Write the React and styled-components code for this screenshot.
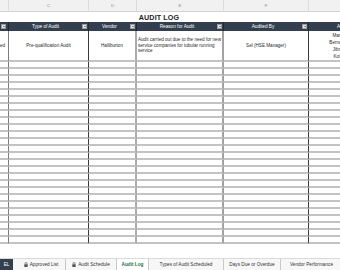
import styled, { createGlobalStyle } from 'styled-components';

const Global = createGlobalStyle`
  html, body {
    margin: 0;
    padding: 0;
    background: #fff;
    width: 340px;
    height: 270px;
    overflow: hidden;
    font-family: "Liberation Sans", Arial, sans-serif;
  }
`;

const Page = styled.div`
  width: 340px;
  height: 270px;
  display: flex;
  flex-direction: column;
  overflow: hidden;
`;

const Sheet = styled.div`
  display: grid;
  grid-template-columns: 9px 80px 48px 87px 85px 60px;
  grid-template-rows: 12px 10px 9px 31px repeat(26, 7px);
  width: 369px;
`;

const borders = {
  b: '1px solid #7d7d7d',
  c: '1px solid #3a3a3a',
  d: '2px solid #ababab',
  e: '2px solid #a2a2a2',
  f: '1px solid #3a3a3a',
  g: 'none',
};

const Letter = styled.div`
  background: #f1f1f1;
  border-bottom: 1px solid #d2d2d2;
  border-right: 1px solid #dcdcdc;
  color: #8a8a8a;
  font-size: 4.4px;
  display: flex;
  align-items: center;
  justify-content: center;
`;

const TitleCell = styled.div`
  grid-column: ${({ $span }) => $span || 'auto'};
  display: flex;
  align-items: center;
  justify-content: center;
  font-weight: bold;
  font-size: 7.2px;
  color: #1e1e1e;
  letter-spacing: 0.1px;
`;

const Head = styled.div`
  background: #333f4f;
  border-right: ${({ $col }) => ($col === 'g' ? 'none' : '1px solid #1f2833')};
  color: #fff;
  font-size: 4.7px;
  display: flex;
  align-items: center;
  padding-right: 1px;
  overflow: hidden;
  white-space: nowrap;
`;

const HeadLabel = styled.span`
  flex: 1;
  text-align: center;
`;

const Drop = styled.span`
  width: 5px;
  height: 5px;
  flex: none;
  background: #e4e4e4;
  border: 0.5px solid #9a9a9a;
  box-sizing: border-box;
  display: flex;
  align-items: center;
  justify-content: center;
  margin-left: ${({ $only }) => ($only ? '1px' : '0')};
  &::after {
    content: '';
    border-left: 1.3px solid transparent;
    border-right: 1.3px solid transparent;
    border-top: 1.5px solid #333;
  }
`;

const Cell = styled.div`
  border-right: ${({ $col }) => borders[$col]};
  border-bottom: 2px solid #c3c3c3;
  font-size: 4.6px;
  line-height: 5.6px;
  color: #2a2a2a;
  display: flex;
  align-items: center;
  justify-content: ${({ $align }) => $align || 'center'};
  text-align: ${({ $text }) => $text || 'center'};
  padding: 0 ${({ $padR }) => $padR || 0}px 0 ${({ $padL }) => $padL || 0}px;
  overflow: hidden;
  white-space: ${({ $wrap }) => ($wrap ? 'normal' : 'nowrap')};
`;

const Names = styled.div`
  display: flex;
  flex-direction: column;
  align-items: center;
  line-height: 7px;
`;

const Spacer = styled.div`
  flex: 1;
`;

const TabBar = styled.div`
  height: 12px;
  flex: none;
  display: flex;
  align-items: stretch;
  background: #f7f7f7;
  border-top: 1px solid #dadada;
  box-sizing: border-box;
  white-space: nowrap;
`;

const Tab = styled.div`
  width: ${({ $w }) => $w}px;
  flex: none;
  box-sizing: border-box;
  display: flex;
  align-items: center;
  justify-content: center;
  gap: 2px;
  font-size: 4.7px;
  font-weight: ${({ $active }) => ($active ? 'bold' : 'normal')};
  color: ${({ $active, $dark }) => ($dark ? '#fff' : $active ? '#217346' : '#333')};
  background: ${({ $active, $dark }) => ($dark ? '#333f4f' : $active ? '#fff' : 'transparent')};
  border-right: ${({ $dark }) => ($dark ? 'none' : '1px solid #c9c9c9')};
  margin-right: ${({ $gap }) => $gap || 0}px;
`;

const Lock = () => (
  <svg width="4" height="5" viewBox="0 0 8 10">
    <path d="M2 4.5V3a2 2 0 0 1 4 0v1.5" fill="none" stroke="#555" strokeWidth="1.4" />
    <rect x="0.5" y="4.5" width="7" height="5.5" rx="0.8" fill="#555" />
  </svg>
);

const cols = ['b', 'c', 'd', 'e', 'f', 'g'];
const letters = ['', 'C', 'D', 'E', 'F', ''];
const headers = ['', 'Type of Audit', 'Vendor', 'Reason for Audit', 'Audited By', 'A'];

export default function App() {
  return (
    <Page>
      <Global />
      <Sheet>
        {letters.map((l, i) => (
          <Letter key={'l' + i}>{l}</Letter>
        ))}

        <TitleCell />
        <TitleCell $span="2 / 6">AUDIT LOG</TitleCell>
        <TitleCell />

        {headers.map((h, i) =>
          cols[i] === 'g' ? (
            <Head key={'h' + i} $col="g">
              <HeadLabel>{h}</HeadLabel>
            </Head>
          ) : (
            <Head key={'h' + i} $col={cols[i]}>
              {h ? <HeadLabel>{h}</HeadLabel> : null}
              <Drop $only={!h} />
            </Head>
          )
        )}

        <Cell $col="b" $align="flex-end" $padR={3}>Completed</Cell>
        <Cell $col="c">Pre-qualification Audit</Cell>
        <Cell $col="d">Halliburton</Cell>
        <Cell $col="e" $align="flex-start" $text="left" $padL={1} $wrap>
          Audit carried out due to the need for new service companies for tubular running
          service
        </Cell>
        <Cell $col="f">Sel (HSE Manager)</Cell>
        <Cell $col="g" $padR={3}>
          <Names>
            <span>Mark</span>
            <span>Bernard</span>
            <span>Jibril</span>
            <span>Kofi</span>
          </Names>
        </Cell>

        {Array.from({ length: 26 }).flatMap((_, r) =>
          cols.map((c) => <Cell key={r + c} $col={c} />)
        )}
      </Sheet>
      <Spacer />
      <TabBar>
        <Tab $dark $w={13} $gap={4}>EL</Tab>
        <Tab $w={49}>
          <Lock />
          Approved List
        </Tab>
        <Tab $w={51}>
          <Lock />
          Audit Schedule
        </Tab>
        <Tab $active $w={32}>Audit Log</Tab>
        <Tab $w={75}>Types of Audit Scheduled</Tab>
        <Tab $w={57}>Days Due or Overdue</Tab>
        <Tab $w={62}>Vendor Performance</Tab>
      </TabBar>
    </Page>
  );
}
